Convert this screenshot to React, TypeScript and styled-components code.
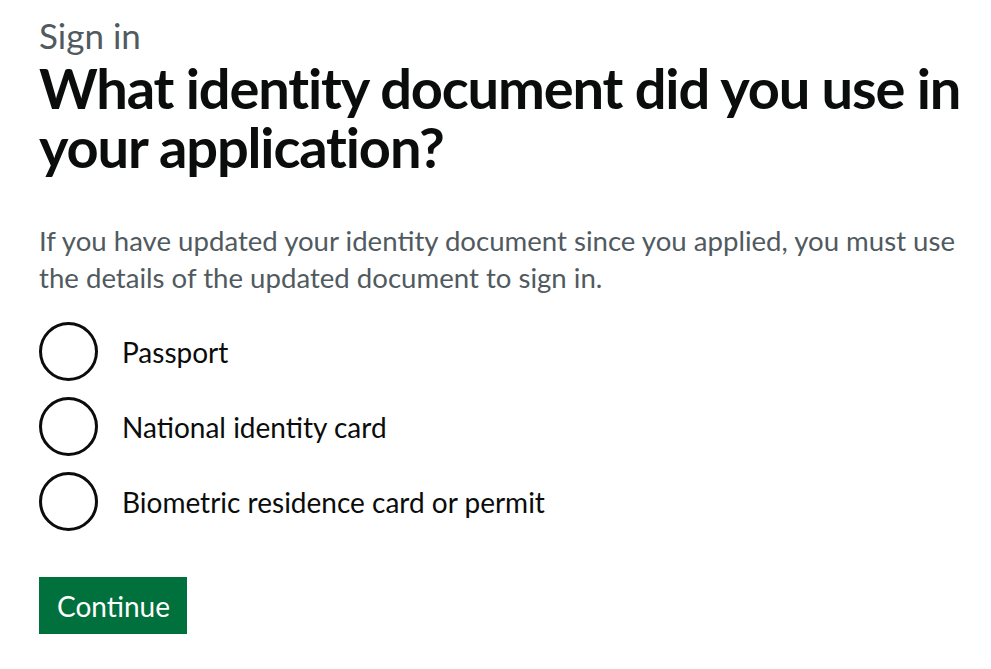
import React, { useState } from 'react';
import styled, { createGlobalStyle } from 'styled-components';

const GlobalStyle = createGlobalStyle`
  body {
    margin: 0;
    background: #ffffff;
    font-family: Lato, "Noto Sans", Arial, sans-serif;
    color: #0b0c0c;
  }
`;

const Main = styled.main`
  padding: 15px 20px 0 39px;
  max-width: 940px;
`;

const Caption = styled.span`
  display: block;
  font-size: 35px;
  line-height: 40px;
  color: #505a5f;
`;

const Heading = styled.h1`
  margin: 3px 0 46px;
  font-size: 56px;
  line-height: 59px;
  font-weight: 700;
  letter-spacing: -1.15px;
`;

const Hint = styled.p`
  margin: 0 0 26px;
  font-size: 27.6px;
  line-height: 37px;
  color: #505a5f;
`;

const RadioList = styled.div`
  display: flex;
  flex-direction: column;
  gap: 16px;
`;

const RadioItem = styled.label`
  display: flex;
  align-items: center;
  gap: 24px;
  cursor: pointer;
`;

const RadioCircle = styled.span<{ $checked: boolean }>`
  position: relative;
  width: 59px;
  height: 59px;
  box-sizing: border-box;
  border: 3px solid #0b0c0c;
  border-radius: 50%;
  flex-shrink: 0;

  &::after {
    content: '';
    position: absolute;
    inset: 12px;
    border-radius: 50%;
    background: #0b0c0c;
    opacity: ${(p) => (p.$checked ? 1 : 0)};
  }
`;

const HiddenInput = styled.input`
  position: absolute;
  opacity: 0;
  width: 0;
  height: 0;
`;

const RadioLabel = styled.span`
  font-size: 28px;
  line-height: 36px;
`;

const Button = styled.button`
  margin-top: 46px;
  padding: 9px 17px 8px 18px;
  border: 0;
  background: #00703c;
  color: #ffffff;
  font-family: inherit;
  font-size: 28px;
  line-height: 40px;
  box-shadow: 0 3px 0 #002d18;
  cursor: pointer;
`;

const options = ['Passport', 'National identity card', 'Biometric residence card or permit'];

export default function App() {
  const [selected, setSelected] = useState<string | null>(null);

  return (
    <>
      <GlobalStyle />
      <Main>
        <Caption>Sign in</Caption>
        <Heading>What identity document did you use in your application?</Heading>
        <Hint>
          If you have updated your identity document since you applied, you must use the details of
          the updated document to sign in.
        </Hint>
        <RadioList>
          {options.map((opt) => (
            <RadioItem key={opt}>
              <HiddenInput
                type="radio"
                name="document"
                checked={selected === opt}
                onChange={() => setSelected(opt)}
              />
              <RadioCircle $checked={selected === opt} />
              <RadioLabel>{opt}</RadioLabel>
            </RadioItem>
          ))}
        </RadioList>
        <Button type="button">Continue</Button>
      </Main>
    </>
  );
}
